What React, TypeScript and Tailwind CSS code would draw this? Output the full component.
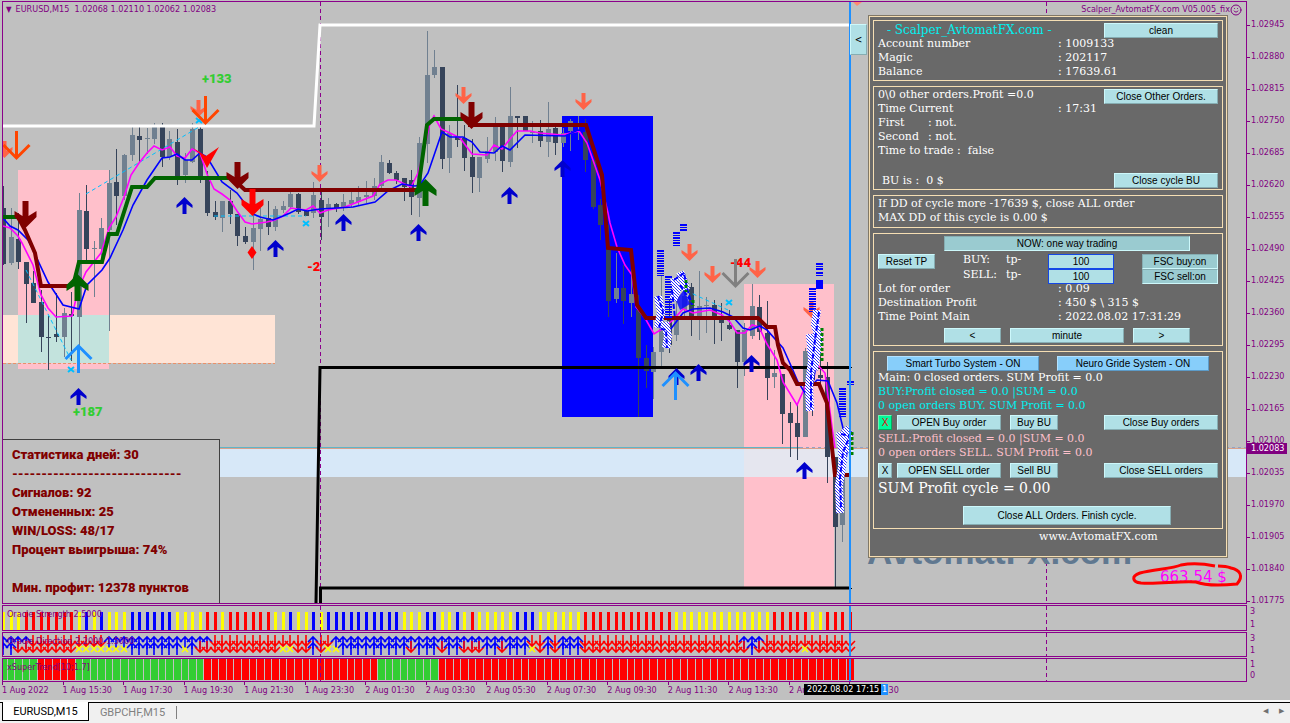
import React, { useState } from 'react';
import { Smile } from 'lucide-react';
import clsx from 'clsx';

const STEP = 7.5625;
const barX = (i: number) => Math.round(3 + i * STEP);

// high, low, body top, body bottom, dark (d) or light (l)
type Candle = [number, number, number, number, 'd' | 'l'];

const candles: Candle[] = [
  [186, 265, 208, 264, 'd'], [208, 265, 237, 263, 'l'], [213, 269, 239, 262, 'd'], [262, 323, 262, 284, 'd'],
  [271, 303, 283, 303, 'd'], [290, 352, 302, 337, 'd'], [316, 370, 337, 338, 'd'], [293, 342, 334, 337, 'd'],
  [308, 357, 313, 337, 'l'], [292, 361, 314, 316, 'd'], [193, 346, 210, 317, 'l'], [185, 260, 211, 249, 'd'],
  [241, 297, 248, 249, 'l'], [218, 260, 228, 249, 'l'], [170, 331, 183, 230, 'l'], [149, 225, 182, 196, 'd'],
  [154, 200, 155, 196, 'l'], [127, 161, 135, 155, 'l'], [127, 163, 136, 140, 'd'], [128, 154, 138, 139, 'l'],
  [123, 144, 127, 139, 'l'], [123, 167, 127, 157, 'd'], [131, 160, 139, 157, 'l'], [129, 185, 142, 178, 'd'],
  [153, 183, 160, 175, 'l'], [123, 163, 129, 162, 'l'], [127, 183, 129, 177, 'd'], [171, 216, 178, 213, 'd'],
  [201, 220, 212, 217, 'd'], [201, 232, 201, 218, 'l'], [190, 224, 201, 214, 'd'], [214, 246, 214, 236, 'd'],
  [227, 244, 236, 242, 'd'], [200, 270, 228, 242, 'l'], [208, 251, 219, 229, 'l'], [201, 235, 218, 227, 'd'],
  [206, 231, 209, 227, 'l'], [201, 213, 206, 210, 'l'], [191, 209, 194, 207, 'l'], [193, 214, 194, 212, 'd'],
  [209, 216, 211, 216, 'd'], [182, 218, 195, 213, 'l'], [192, 240, 200, 217, 'd'], [198, 227, 204, 209, 'l'],
  [203, 212, 204, 208, 'd'], [194, 211, 202, 207, 'l'], [191, 207, 200, 204, 'l'], [186, 205, 197, 202, 'l'],
  [181, 203, 195, 197, 'l'], [178, 200, 186, 196, 'l'], [155, 190, 162, 186, 'l'], [160, 174, 163, 173, 'd'],
  [171, 184, 173, 180, 'd'], [178, 201, 178, 187, 'd'], [170, 215, 180, 197, 'd'], [137, 217, 143, 198, 'l'],
  [31, 163, 75, 144, 'l'], [50, 78, 67, 75, 'l'], [67, 169, 67, 159, 'd'], [125, 173, 133, 158, 'l'],
  [85, 147, 137, 140, 'd'], [125, 171, 138, 158, 'd'], [139, 193, 157, 177, 'd'], [157, 192, 157, 178, 'l'],
  [137, 163, 151, 159, 'l'], [117, 161, 127, 152, 'l'], [127, 172, 127, 161, 'd'], [87, 167, 116, 162, 'l'],
  [116, 148, 116, 118, 'd'], [116, 131, 116, 131, 'd'], [121, 143, 132, 133, 'l'], [120, 147, 131, 141, 'd'],
  [102, 157, 129, 142, 'l'], [126, 155, 128, 143, 'd'], [128, 147, 133, 143, 'l'], [119, 151, 121, 131, 'l'],
  [116, 140, 125, 127, 'l'], [119, 172, 132, 160, 'd'], [160, 209, 160, 207, 'd'], [199, 240, 205, 225, 'd'],
  [225, 317, 248, 301, 'd'], [253, 303, 288, 299, 'l'], [265, 324, 288, 301, 'd'], [265, 317, 294, 303, 'l'],
  [295, 417, 310, 358, 'd'], [345, 388, 358, 371, 'd'], [347, 399, 352, 372, 'l'], [276, 367, 318, 352, 'l'],
  [300, 353, 320, 345, 'd'], [300, 341, 318, 335, 'l'], [286, 320, 296, 310, 'l'], [283, 336, 287, 320, 'd'],
  [271, 340, 306, 318, 'l'], [297, 333, 305, 306, 'l'], [300, 344, 305, 318, 'd'], [303, 341, 318, 323, 'd'],
  [310, 330, 325, 329, 'd'], [330, 388, 330, 362, 'd'], [323, 376, 330, 362, 'l'], [284, 339, 306, 336, 'l'],
  [295, 340, 307, 332, 'd'], [301, 400, 333, 378, 'd'], [350, 388, 373, 377, 'l'], [374, 444, 374, 414, 'd'],
  [402, 457, 413, 423, 'd'], [405, 460, 423, 437, 'd'], [348, 437, 351, 437, 'l'], [340, 416, 350, 380, 'd'],
  [340, 385, 375, 378, 'd'], [362, 483, 377, 457, 'd'], [457, 587, 457, 527, 'd'], [470, 542, 470, 525, 'l'],
];

const magentaLine =
  '3,226 10,228 18,236 22,243 33,265 41,295 48,308 56,317 72,316 78,290 86,272 101,253 109,228 116,217 124,197 131,175 139,163 147,153 154,146 162,150 170,147 177,156 185,158 192,149 200,153 207,174 214,189 222,194 230,200 237,211 245,222 252,224 267,222 275,220 283,216 291,208 298,209 306,210 313,206 320,213 328,210 345,207 373,196 380,184 388,180 396,180 411,187 418,173 424,150 430,123 434,116 441,129 450,133 460,138 472,154 487,155 494,145 502,149 510,139 517,131 530,131 540,133 562,135 579,131 587,143 600,180 608,213 610,223 617,247 625,265 632,275 636,307 645,318 654,334 662,329 673,320 683,309 693,313 710,310 722,315 730,322 737,333 745,333 752,325 759,327 767,344 777,360 783,382 797,405 805,387 815,362 825,373 832,427 835,448';

const blueLineStart =
  '3,218 10,226 18,230 28,240 33,250 48,282 63,305 79,309 87,285 102,270 110,258 123,230 133,205 147,180 162,158 170,157 177,154 185,160 192,160 200,153 207,157 222,182 237,193 253,214 260,217 273,220 283,216 290,213 298,209 307,211 320,209 353,207 375,202 388,191 402,184 415,186 420,185 428,173 442,132 450,137 463,137 472,142 480,152 494,153 502,146 510,150 525,135 565,136 578,130 584,131';

const blueLineEnd =
  '670,330 683,313 693,309 710,308 723,312 733,317 743,328 750,330 760,326 767,330 783,348 792,368 798,382 805,393 817,380 828,381 837,403 843,428 840,478 850,440';

const trendLines: { color: string; points: string }[] = [
  { color: '#006400', points: '3,217 18,217' },
  { color: '#800000', points: '18,217 25,230 35,253 41,286 71,286' },
  { color: '#006400', points: '73,286 79,262 102,262 109,234 117,234 132,187 147,187 155,178 232,178' },
  { color: '#800000', points: '232,178 245,190 418,190' },
  { color: '#006400', points: '418,190 427,125 434,119 465,119' },
  {
    color: '#800000',
    points: '468,125 586,125 602,175 608,248 631,250 637,305 646,318 758,318 767,327 775,327 778,345 783,363 790,370 797,384 819,384 827,403 835,475 851,475',
  },
];

const SMALL = 'M0 0L8 8V11L2 7V17H-2V7L-8 11V8Z';
const BIG = 'M0 0L11 11V17L3 12V27H-3V12L-11 17V11Z';
const THIN = 'M0 28V1M-13 14L0 1L13 14';

type Mark = { x: number; y: number; shape: 'small' | 'big' | 'thin'; color: string; down?: boolean };

const marks: Mark[] = [
  ...[[184, 197], [275, 240], [78, 388], [343, 214], [418, 224], [509, 187], [562, 160], [676, 368], [698, 364], [751, 355], [804, 462]].map(
    ([x, y]): Mark => ({ x, y, shape: 'small', color: '#0000cd' })
  ),
  ...[[4, 158], [198, 117], [319, 182], [463, 104], [583, 110], [689, 261], [712, 283], [757, 278], [811, 318]].map(
    ([x, y]): Mark => ({ x, y, shape: 'small', color: '#ff6347', down: true })
  ),
  { x: 16, y: 159, shape: 'thin', color: '#ff4500', down: true },
  { x: 205, y: 124, shape: 'thin', color: '#ff4500', down: true },
  { x: 735, y: 287, shape: 'thin', color: '#808080', down: true },
  { x: 78, y: 345, shape: 'thin', color: '#1e90ff' },
  { x: 675, y: 372, shape: 'thin', color: '#1e90ff' },
  { x: 25, y: 228, shape: 'big', color: '#800000', down: true },
  { x: 237, y: 189, shape: 'big', color: '#800000', down: true },
  { x: 471, y: 129, shape: 'big', color: '#800000', down: true },
  { x: 252, y: 216, shape: 'big', color: '#ff0000', down: true },
  { x: 77, y: 274, shape: 'big', color: '#006400' },
  { x: 425, y: 179, shape: 'big', color: '#006400' },
];

// x, top, bottom of the stacked order levels
const ladders = [[657, 250, 276], [665, 276, 318], [673, 232, 247], [680, 224, 232], [816, 263, 270], [816, 272, 277], [809, 288, 312], [839, 388, 418], [847, 381, 386]];

const hatches = [
  '658,296 661,312 658,328',
  '665,322 668,336 666,348',
  '674,278 677,290 673,300',
  '680,272 684,282 686,290',
  '810,334 812,360 809,385 810,411',
  '817,310 815,325 819,338 814,370',
  '840,432 843,460 839,485 840,513',
  '844,428 849,434 845,452',
];

const expand = (runs: string) =>
  (runs.match(/\d+[a-z]/g) || []).flatMap((r) => Array<string>(parseInt(r)).fill(r.slice(-1)));

const strength = expand('3y7r1y1b1y1b3y6b4y2r1y6r2y1b2y1b1y10b3y2b2y1b1y1r5y3b6y12r13y5r2y4r');
const directionTop = expand('4u10d14u13d1u2d26u2d1u1d3u21d3u12d');
const directionBottom = expand('2u8d7x7u1x1u11d2x2d1u1d2x9u1d3u1d2u3d2u1d3u1x1d1u1d3u22d1u6d1x6d');
const superTrend = expand('5g5r17g23r8g55r');

const COLORS: Record<string, string> = { y: '#ffff00', r: '#ff0000', b: '#0000ff', g: '#32cd32' };

const prices = Array.from({ length: 19 }, (_, i) => (1.02945 - i * 0.00065).toFixed(5));

const times = [
  '1 Aug 2022', '1 Aug 15:30', '1 Aug 17:30', '1 Aug 19:30', '1 Aug 21:30', '1 Aug 23:30', '2 Aug 01:30', '2 Aug 03:30',
  '2 Aug 05:30', '2 Aug 07:30', '2 Aug 09:30', '2 Aug 11:30', '2 Aug 13:30', '2 Aug 15:30', '2 Aug 17:30',
];

const smallFont = "font-['DejaVu_Sans_Condensed','Noto_Sans',sans-serif] text-[9px]";
const impactFont = "font-['Impact','Roboto',sans-serif] font-black";

const Guides: React.FC<{ top: number; bottom: number }> = ({ top, bottom }) => (
  <>
    <path d={`M320.5 ${top}V${bottom}M1046.5 ${top}V${bottom}`} stroke="#8b008b" strokeDasharray="4 3" />
    <path d={`M850 ${top}V${bottom}`} stroke="#1e90ff" strokeWidth={2} />
  </>
);

const PriceChart: React.FC = () => (
  <svg className="absolute inset-0 h-full w-full" aria-hidden="true">
    <defs>
      <pattern id="hatch" width="3" height="3" patternUnits="userSpaceOnUse">
        <rect width="3" height="3" fill="#fff" />
        <path d="M0 0L3 3M-1 2L1 4M2 -1L4 1" stroke="#00f" strokeWidth="0.8" />
      </pattern>
    </defs>
    <g transform="translate(-3 -2)">
      {/* zones */}
      <rect x={18} y={170} width={91} height={199} fill="#ffc0cb" />
      <rect x={3} y={315} width={272} height={48} fill="#ffe4d6" />
      <rect x={18} y={315} width={91} height={48} fill="#c3e3dd" />
      <path d="M3 363.5H275" stroke="#e9916a" strokeDasharray="3 2" />
      <rect x={562} y={116} width={91} height={301} fill="#0000ff" />
      <rect x={744} y={284} width={90} height={303} fill="#ffc0cb" />
      <rect x={3} y={449} width={1243} height={28} fill="#d7e8f8" />
      <rect x={744} y={449} width={90} height={28} fill="#e5e6ef" />
      <path d="M3 447.5H800" stroke="#5fb5c8" />
      <path d="M800 447.5H1246" stroke="#8fa3c8" strokeDasharray="3 3" />
      <path d="M3 448.5H1246" stroke="#d9a08a" />
      <path d="M320.5 2V603M1046.5 2V603" stroke="#8b008b" strokeDasharray="4 3" />

      {candles.map(([high, low, top, bottom, tone], i) => (
        <g key={i} fill={tone === 'd' ? '#36445a' : '#708090'}>
          <rect x={barX(i)} y={high} width={1} height={low - high} />
          <rect x={barX(i) - 2} y={top} width={5} height={Math.max(bottom - top, 1)} />
        </g>
      ))}

      <path d="M3 126H314L320 25H850" fill="none" stroke="#fff" strokeWidth={3} />
      <path d="M316 603L320 367.5H850M320.5 603V588H850" fill="none" stroke="#000" strokeWidth={3} />
      <path d="M850 367.5H852M850 588.5H852" stroke="#000" />

      <g fill="none" stroke="#00bfff" strokeDasharray="4 3">
        <path d="M26 270L71 360M86 194L199 127M214 216H306M680 288L728 310" />
      </g>
      <g stroke="#00bfff" strokeWidth={2}>
        {[[199, 120], [306, 223], [71, 369], [729, 302]].map(([x, y]) => (
          <path key={x} d={`M${x - 3} ${y - 2}L${x + 3} ${y + 3}M${x + 3} ${y - 2}L${x - 3} ${y + 3}`} />
        ))}
      </g>

      <g fill="none" strokeWidth={1.6}>
        <polyline points={magentaLine} stroke="#ff00ff" />
        <polyline points={blueLineStart} stroke="#0000ff" />
        <polyline points={blueLineEnd} stroke="#0000ff" />
      </g>
      {trendLines.map((line) => (
        <polyline key={line.points} points={line.points} fill="none" stroke={line.color} strokeWidth={4} />
      ))}

      <path d="M193 148L206 156L219 147L207 168L200 154Z" fill="#ff0000" />
      <path d="M252 246L256.5 252.5L252 259L247.5 252.5Z" fill="#ff0000" />

      <g className={clsx(impactFont, 'text-[13px]')}>
        <text x={202} y={83} fill="#32cd32">+133</text>
        <text x={73} y={416} fill="#32cd32">+187</text>
        <text x={307} y={271} fill="#ff0000">-2</text>
        <text x={730} y={267} fill="#ff0000">-44</text>
      </g>

      {marks.map((m, i) => (
        <path
          key={i}
          d={m.shape === 'small' ? SMALL : m.shape === 'big' ? BIG : THIN}
          transform={`translate(${m.x + 0.5} ${m.y}) scale(1 ${m.down ? -1 : 1})`}
          fill={m.shape === 'thin' ? 'none' : m.color}
          stroke={m.shape === 'thin' ? m.color : 'none'}
          strokeWidth={3}
        />
      ))}

      {/* order levels and trade clusters */}
      {ladders.map(([x, top, bottom], i) => (
        <path key={i} d={`M${x + 3.5} ${top}V${bottom}`} stroke="#0000ff" strokeWidth={7} strokeDasharray="2 1 1 1" />
      ))}
      <rect x={816} y={280} width={7} height={9} fill="#0000ff" />
      <path d="M676 300L684 290L690 304L680 310ZM816 315L821 350L815 376L811 398L810 350ZM843 440L850 438L843 484Z" fill="#0000ff" opacity={0.8} />
      {hatches.map((points) => (
        <polyline key={points} points={points} fill="none" stroke="url(#hatch)" strokeWidth={8} />
      ))}
      <path
        d="M658 296L663 312L659 328L666 330L667 348M674 280L684 273L687 288L692 305M672 290L675 318M680 285L690 300M819 312L815 340L811 372L811 410M841 434L850 436L843 452L840 478L841 508"
        fill="none"
        stroke="#0000ff"
        strokeWidth={2}
        strokeDasharray="5 2"
      />
      <path d="M686 280V292M693 300V306M822 328V362M852 432V455" stroke="#008000" strokeWidth={3} strokeDasharray="3 2" />

      <path d="M850 2V603" stroke="#1e90ff" strokeWidth={2} />
      <path d="M853 2H862L857 6Z" fill="#ff8a70" />

      <text x={867} y={564} fill="#607890" className="font-['Liberation_Sans',sans-serif] text-[35px] font-bold">AvtomatFX.com</text>
      <text x={1160} y={582} fill="#ff00ff" className="font-['DejaVu_Sans',sans-serif] text-[15px]">663.54 $</text>
      <path
        d="M1215 566C1205 564 1192 563 1181 565C1172 569 1153 569 1140 573C1131 576 1132 582 1141 583C1160 584 1178 581 1196 582C1206 586 1226 585 1237 584C1244 576 1240 570 1231 568C1226 566 1222 566 1218 566"
        fill="none"
        stroke="#ff0000"
        strokeWidth={3}
      />
    </g>
  </svg>
);

const bevel = {
  normal: 'border-t-[#cdf8fb] border-l-[#cdf8fb] border-b-[#86adb2] border-r-[#86adb2] bg-[#b0e0e6] text-black',
  pressed: 'border-t-[#86adb2] border-l-[#86adb2] border-b-[#cdf8fb] border-r-[#cdf8fb] bg-[#9acbd0] text-black',
  blue: 'border-t-[#b4e2ff] border-l-[#b4e2ff] border-b-[#5c9bc8] border-r-[#5c9bc8] bg-[#87cefa] text-black',
  green: 'border-t-[#6cf5b0] border-l-[#6cf5b0] border-b-[#00b060] border-r-[#00b060] bg-[#00fa9a] text-red-600',
};

const PanelButton: React.FC<{ children: React.ReactNode; className?: string; tone?: keyof typeof bevel }> = ({
  children,
  className,
  tone = 'normal',
}) => (
  <button
    type="button"
    className={clsx(
      "flex shrink-0 items-center justify-center border font-['Liberation_Sans',Arial,sans-serif] text-[10px] leading-none whitespace-nowrap",
      bevel[tone],
      className
    )}
  >
    {children}
  </button>
);

const Group: React.FC<{ children: React.ReactNode; className?: string }> = ({ children, className }) => (
  <section className={clsx('border border-[#f5deb3] px-1', className)}>{children}</section>
);

const Field: React.FC<{ label: string; value: string }> = ({ label, value }) => (
  <div className="grid grid-cols-[180px_1fr]">
    <span>{label}</span>
    <span>: {value}</span>
  </div>
);

const TpRow: React.FC<{ side: 'buy' | 'sell'; children?: React.ReactNode }> = ({ side, children }) => {
  const [value, setValue] = useState('100');
  return (
    <div className="grid h-[15px] grid-cols-[85px_43px_42px_66px_1fr] items-start">
      <div>{children}</div>
      <label htmlFor={`tp-${side}`} className="leading-3 uppercase">{side}:</label>
      <span className="leading-3">tp-</span>
      <input
        id={`tp-${side}`}
        value={value}
        onChange={(e) => setValue(e.target.value)}
        className="h-[15px] w-full border border-blue-700 bg-[#b0e0e6] text-center font-['Liberation_Sans',Arial,sans-serif] text-[10px] text-black"
      />
      <PanelButton tone="pressed" className="ml-auto h-[15px] w-[76px]">FSC {side}:on</PanelButton>
    </div>
  );
};

const ScalperPanel: React.FC = () => (
  <aside className="absolute top-[14px] right-[19px] w-[358px] border border-[#f5deb3] bg-[#696969] p-[3px] pb-3 font-['DejaVu_Serif',serif] text-[11px] leading-[14px] whitespace-pre text-white outline outline-[#807868]">
    <div className="flex flex-col gap-[5px]">
      <Group className="pt-0.5 pb-px">
        <div className="flex h-[14px] justify-between">
          <h2 className="pl-[9px] text-[12px] text-[#00f0f0]">- Scalper_AvtomatFX.com -</h2>
          <PanelButton className="h-[15px] w-[114px]">clean</PanelButton>
        </div>
        <Field label="Account number" value="1009133" />
        <Field label="Magic" value="202117" />
        <Field label="Balance" value="17639.61" />
      </Group>

      <Group className="pt-px">
        <div className="flex h-[14px] justify-between">
          <p>0\0 other orders.Profit =0.0</p>
          <PanelButton className="mt-px h-[15px] w-[114px]">Close Other Orders.</PanelButton>
        </div>
        <Field label="Time Current" value="17:31" />
        <div className="grid grid-cols-[50px_1fr]">
          <span>First</span>
          <span>: not.</span>
          <span>Second</span>
          <span>: not.</span>
        </div>
        <p>Time to trade :  false</p>
        <div className="mt-[14px] flex h-[17px] items-center justify-between">
          <p className="pl-1">BU is :  0 $</p>
          <PanelButton className="h-[15px] w-[104px]">Close cycle BU</PanelButton>
        </div>
      </Group>

      <Group className="pt-px pb-0.5">
        <p>If DD of cycle more -17639 $, close ALL order</p>
        <p>MAX DD of this cycle is 0.00 $</p>
      </Group>

      <Group className="pt-0.5 pb-0.5">
        <PanelButton tone="pressed" className="mb-[3px] ml-[66px] h-[15px] w-[246px]">NOW: one way trading</PanelButton>
        <TpRow side="buy">
          <PanelButton className="h-[15px] w-[57px]">Reset TP</PanelButton>
        </TpRow>
        <TpRow side="sell" />
        <div className="-mt-0.5">
          <Field label="Lot for order" value="0.09" />
          <Field label="Destination Profit" value="450 $ \ 315 $" />
          <Field label="Time Point Main" value="2022.08.02 17:31:29" />
        </div>
        <div className="mt-1 ml-[66px] flex gap-[9px]">
          <PanelButton className="h-[15px] w-[57px]">&lt;</PanelButton>
          <PanelButton className="h-[15px] w-[114px]">minute</PanelButton>
          <PanelButton className="h-[15px] w-[57px]">&gt;</PanelButton>
        </div>
      </Group>

      <Group className="pt-1 pb-[3px]">
        <div className="flex justify-between px-[9px]">
          <PanelButton tone="blue" className="h-[15px] w-[152px]">Smart Turbo System - ON</PanelButton>
          <PanelButton tone="blue" className="h-[15px] w-[152px]">Neuro Gride System - ON</PanelButton>
        </div>
        <p>Main: 0 closed orders. SUM Profit = 0.0</p>
        <div className="text-[#00f0f0]">
          <p>BUY:Profit closed = 0.0 |SUM = 0.0</p>
          <p>0 open orders BUY. SUM Profit = 0.0</p>
        </div>
        <div className="mt-0.5 flex">
          <PanelButton tone="green" className="h-[15px] w-[14px]">X</PanelButton>
          <PanelButton className="ml-[5px] h-[15px] w-[104px]">OPEN Buy order</PanelButton>
          <PanelButton className="ml-[9px] h-[15px] w-[48px]">Buy BU</PanelButton>
          <PanelButton className="ml-auto h-[15px] w-[114px]">Close Buy orders</PanelButton>
        </div>
        <div className="mt-0.5 text-[#ffc0cb]">
          <p>SELL:Profit closed = 0.0 |SUM = 0.0</p>
          <p>0 open orders SELL. SUM Profit = 0.0</p>
        </div>
        <div className="mt-[3px] flex">
          <PanelButton className="h-[15px] w-[14px]">X</PanelButton>
          <PanelButton className="ml-[5px] h-[15px] w-[104px]">OPEN SELL order</PanelButton>
          <PanelButton className="ml-[9px] h-[15px] w-[48px]">Sell BU</PanelButton>
          <PanelButton className="ml-auto h-[15px] w-[114px]">Close SELL orders</PanelButton>
        </div>
        <p className="text-[14px] leading-5">SUM Profit cycle = 0.00</p>
        <PanelButton className="mt-2 ml-[85px] h-[19px] w-[208px]">Close ALL Orders. Finish cycle.</PanelButton>
      </Group>
    </div>
    <p className="mt-px pl-[166px]">www.AvtomatFX.com</p>
  </aside>
);

const Statistics: React.FC = () => (
  <section
    className={clsx(
      'absolute bottom-0 left-0 h-[164px] w-[217px] border-t border-r border-[#404040] bg-[#c0c0c0] pt-[5px] pl-[9px] text-[13px] leading-[19px] whitespace-nowrap text-[#800000]',
      impactFont
    )}
  >
    <p>Статистика дней: 30</p>
    <p>-----------------------------</p>
    <p>Сигналов: 92</p>
    <p>Отмененных: 25</p>
    <p>WIN/LOSS: 48/17</p>
    <p>Процент выигрыша: 74%</p>
    <p className="mt-[19px]">Мин. профит: 12378 пунктов</p>
  </section>
);

const IndicatorRow: React.FC<{ title: string; scale: [string, string]; className: string; children: React.ReactNode }> = ({
  title,
  scale,
  className,
  children,
}) => (
  <div className={clsx('flex', className)}>
    <div className="relative min-w-0 flex-1 overflow-hidden border border-[#8b008b]">
      <svg className="absolute inset-0 h-full w-full" aria-hidden="true">{children}</svg>
      <p className="relative pl-1 leading-4">{title}</p>
    </div>
    <div className="flex w-[43px] flex-col justify-between py-px pl-[3px] leading-[11px]">
      <span>{scale[0]}</span>
      <span>{scale[1]}</span>
    </div>
  </div>
);

const directionPath = (kind: string, x: number, up: number, down: number) => {
  if (kind === 'u') return `M${x} ${up}V${up + 12}M${x - 5} ${up + 5}L${x} ${up}L${x + 5} ${up + 5}`;
  if (kind === 'd') return `M${x} ${down - 11}V${down}M${x - 5} ${down - 5}L${x} ${down}L${x + 5} ${down - 5}`;
  return `M${x - 3} ${down - 6}L${x + 3} ${down}M${x + 3} ${down - 6}L${x - 3} ${down}`;
};

const directionColor: Record<string, string> = { u: '#0000ff', d: '#ff0000', x: '#ffff00' };

export default function App() {
  const [tab, setTab] = useState('EURUSD,M15');

  return (
    <div className="flex min-h-screen flex-col bg-[#c0c0c0]">
      <main className={clsx('flex flex-1 flex-col gap-px pt-px pl-[2px] text-[#800080]', smallFont)}>
        <div className="flex flex-1">
          <div className="relative min-w-0 flex-1 overflow-hidden border border-[#8b008b]">
            <PriceChart />
            <header className="relative flex h-4 items-center justify-between pr-1 pl-[3px] whitespace-pre">
              <h1>
                <span className="mr-1 text-[8px]">▼</span>EURUSD,M15  1.02068 1.02110 1.02062 1.02083
              </h1>
              <p className="flex items-center">
                Scalper_AvtomatFX.com V05.005_fix<Smile size={12} strokeWidth={2} />
              </p>
            </header>
            <Statistics />
            <button
              type="button"
              className="absolute top-[22px] right-[379px] h-[31px] w-[17px] border border-t-[#cdf8fb] border-r-[#86adb2] border-b-[#86adb2] border-l-[#cdf8fb] bg-[#b0e0e6] text-[10px] text-black"
            >
              &lt;
            </button>
            <ScalperPanel />
          </div>
          <div className="relative w-[43px]">
            <ul className="-mb-4 pt-2">
              {prices.map((price) => (
                <li key={price} className="flex h-8 items-center">
                  <span className="mr-px h-px w-[3px] bg-[#800080]" />
                  {price}
                </li>
              ))}
            </ul>
            <span className="absolute top-[442px] left-0 w-10 bg-[#800080] pl-1 leading-[11px] text-white">1.02083</span>
          </div>
        </div>

        <IndicatorRow title="Oracle Strength 2.5000" scale={['3', '1']} className="h-[26px]">
          <g transform="translate(-3 -606)">
            {strength.map((c, i) => (
              <rect key={i} x={barX(i) - 1} y={612} width={3} height={18} fill={COLORS[c]} />
            ))}
            <Guides top={606} bottom={630} />
          </g>
        </IndicatorRow>

        <IndicatorRow title="Oracle Direction 2.2000 1.5000" scale={['3', '1']} className="h-[25px]">
          <g transform="translate(-3 -633)" fill="none">
            {directionTop.map((k, i) => (
              <path key={i} d={directionPath(k, barX(i), 637, 646)} stroke={directionColor[k]} strokeWidth={1.6} />
            ))}
            {directionBottom.map((k, i) => (
              <path key={i} d={directionPath(k, barX(i), 643, 652)} stroke={directionColor[k]} strokeWidth={1.6} />
            ))}
            <Guides top={633} bottom={656} />
          </g>
        </IndicatorRow>

        <IndicatorRow title="xSuperTrend[10;1.7]" scale={['1', '0']} className="h-[24px]">
          <g transform="translate(-3 -659)">
            {superTrend.map((c, i) => (
              <rect key={i} x={barX(i) - 3} y={659} width={barX(i + 1) - barX(i) - 1} height={21} fill={COLORS[c]} />
            ))}
            <Guides top={659} bottom={681} />
          </g>
        </IndicatorRow>

        <div className="relative -mt-px h-[18px]">
          <ul className="grid w-[908px] grid-cols-[repeat(15,minmax(0,1fr))]">
            {times.map((time) => (
              <li key={time} className="whitespace-nowrap">
                <span className="block h-[3px] w-px bg-[#800080]" />
                <span className="block leading-[11px]">{time}</span>
              </li>
            ))}
          </ul>
          <div className="absolute top-[2px] left-[802px] flex leading-[11px] text-white">
            <span className="w-[77px] bg-black pl-[3px] whitespace-nowrap">2022.08.02 17:15</span>
            <span className="w-[7px] bg-[#1e90ff] pl-px">1</span>
          </div>
        </div>
      </main>

      <footer className="flex h-[23px] border-t-2 border-[#f8f8f8] bg-[#f0f0f0] font-['Roboto','Noto_Sans',sans-serif] text-[11px] leading-none">
        <div role="tablist" className="flex flex-1 items-start border-t border-black pl-[2px]">
          {['EURUSD,M15', 'GBPCHF,M15'].map((name) => (
            <button
              key={name}
              type="button"
              role="tab"
              aria-selected={tab === name}
              onClick={() => setTab(name)}
              className={clsx(
                'h-[19px] w-[87px] border-black',
                tab === name ? '-mt-px border border-t-0 bg-white text-black' : 'text-[#808080]'
              )}
            >
              {name}
            </button>
          ))}
          <span className="mt-[3px] h-[13px] w-px bg-[#808080]" />
          <div className="mt-[5px] mr-[6px] ml-auto flex gap-[11px] text-[7px] text-[#707070]">
            <button type="button" aria-label="Previous chart">◀</button>
            <button type="button" aria-label="Next chart">▶</button>
          </div>
        </div>
      </footer>
    </div>
  );
}
